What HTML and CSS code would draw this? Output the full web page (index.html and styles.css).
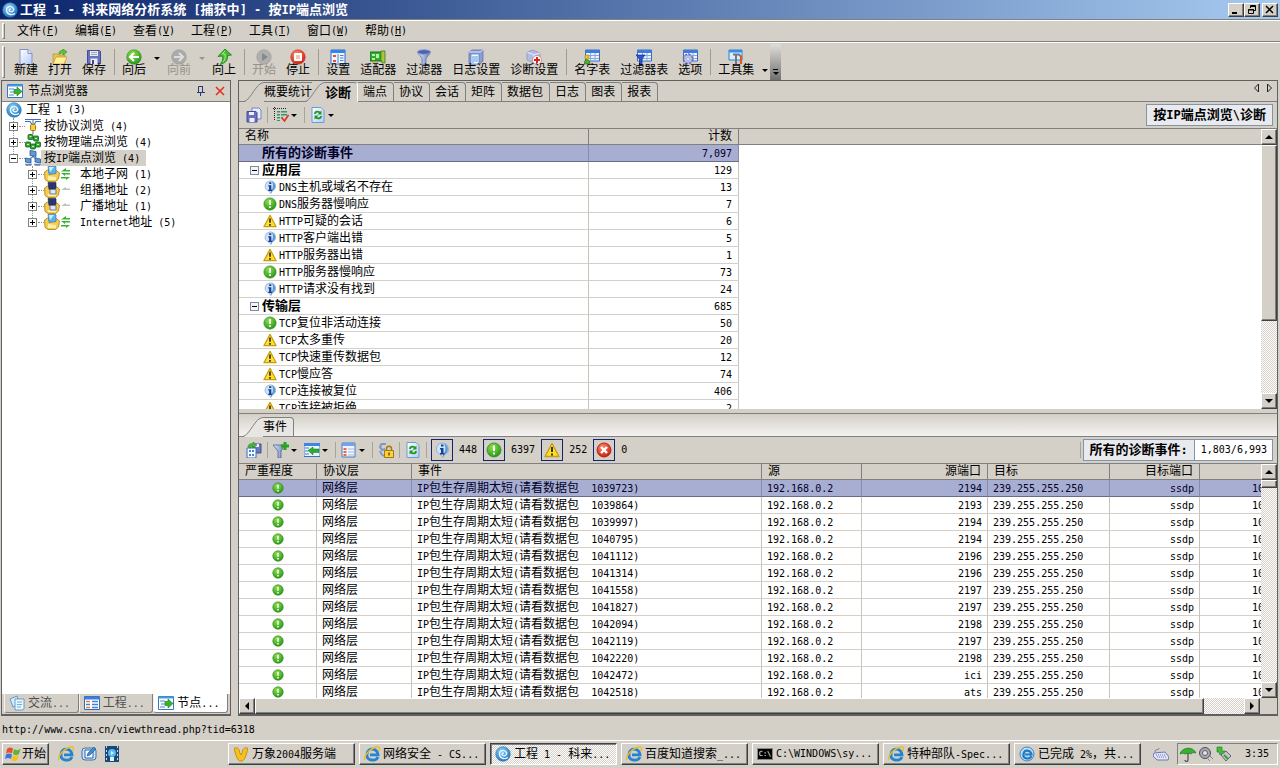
FILE: index.html
```
<!DOCTYPE html>
<html lang="zh-CN">
<head>
    <meta charset="UTF-8">
    <meta name="viewport" content="width=device-width, initial-scale=1.0">
    <title>科来网络分析系统</title>
    <link rel="stylesheet" href="styles.css">
</head>
<body>
    <svg class="defs" aria-hidden="true">
        <defs>
            <radialGradient id="gBlue" cx=".4" cy=".3" r=".8"><stop offset="0" stop-color="#8cd0f4"/><stop offset="1" stop-color="#1568b8"/></radialGradient>
            <radialGradient id="gGreen" cx=".4" cy=".3" r=".8"><stop offset="0" stop-color="#8fe04c"/><stop offset="1" stop-color="#1b8f14"/></radialGradient>
            <radialGradient id="gRed" cx=".4" cy=".3" r=".8"><stop offset="0" stop-color="#ff8a6c"/><stop offset="1" stop-color="#c81408"/></radialGradient>
            <linearGradient id="gPage" x1="0" y1="0" x2="1" y2="1"><stop offset="0" stop-color="#fff"/><stop offset="1" stop-color="#b4ccf4"/></linearGradient>
            <linearGradient id="gSteel" x1="0" y1="0" x2="1" y2="0"><stop offset="0" stop-color="#e4ecfa"/><stop offset="1" stop-color="#6478b8"/></linearGradient>
        </defs>
        <symbol id="logo" viewBox="0 0 16 16"><circle cx="8" cy="8" r="7.3" fill="url(#gBlue)" stroke="#2b7cc0" stroke-width=".6"/><path d="M13 11.5C9 14 4.500 12 4.500 8S9 3.500 11 6s-1 4.500-3 3.500S7.500 7 8.800 7" fill="none" stroke="#eaf8ff" stroke-width="1.300"/></symbol>
        <symbol id="new" viewBox="0 0 16 16"><path d="M2 .5h8l4 4v11H2z" fill="url(#gPage)" stroke="#7e94c8"/><path d="M10 .5v4h4" fill="#dce8fc" stroke="#7e94c8"/></symbol>
        <symbol id="open" viewBox="0 0 16 16"><path d="M1 5h5l1 1h6v9H1z" fill="#e8c34a" stroke="#b8902a" stroke-width=".7"/><path d="M4 8h11l-3 7H1z" fill="#ffef9c" stroke="#c09a30" stroke-width=".7"/><path d="M7 5c0-3 2-4 4-3.500V0l4 3-4 3V4C9.500 3.500 8.500 4 8 5z" fill="#5cc82c" stroke="#2a8a18" stroke-width=".6"/></symbol>
        <symbol id="save" viewBox="0 0 16 16"><path d="M1.500 1.500h12l1 1v12h-13z" fill="#6a70bc" stroke="#454a94"/><path d="M4 2h8v5H4zM4.500 9.500h7V15h-7z" fill="#e8ecfa"/><path d="M5 3.500h6M5 5.500h6" stroke="#9aa"/><path d="M6 11h2v4H6z" fill="#45488c"/></symbol>
        <symbol id="back" viewBox="0 0 16 16"><circle cx="8" cy="8" r="7.300" fill="url(#gGreen)" stroke="#2a8a1a" stroke-width=".5"/><path d="M13 8H4.500M8 4L4 8l4 4" fill="none" stroke="#fff" stroke-width="2.200"/></symbol>
        <symbol id="forward" viewBox="0 0 16 16"><circle cx="8" cy="8" r="7.300" fill="#aaa" stroke="#999" stroke-width=".5"/><path d="M3 8h8.500M8 4l4 4-4 4" fill="none" stroke="#ddd" stroke-width="2.200"/></symbol>
        <symbol id="up" viewBox="0 0 16 16"><path d="M9 0L15.500 6l-4 .5C12 11 10 14 4 15.500 7 12 7 10 6.500 7L2 7.500z" fill="#42bd2c" stroke="#18801c" stroke-width=".8"/><path d="M9 2L6 5l3 0c.5 4 0 6-2 8" fill="none" stroke="#a8f088"/></symbol>
        <symbol id="play" viewBox="0 0 16 16"><circle cx="8" cy="8" r="7.300" fill="#b0b0b0" stroke="#999" stroke-width=".5"/><path d="M6 4l6 4-6 4z" fill="#888"/></symbol>
        <symbol id="stop" viewBox="0 0 16 16"><circle cx="8" cy="8" r="7.300" fill="url(#gRed)" stroke="#d04030" stroke-width=".6"/><rect x="4" y="4" width="8" height="8" rx="1" fill="#fff"/><path d="M6 6h4v4H6z" fill="#f8c0b4"/></symbol>
        <symbol id="setting" viewBox="0 0 16 16"><path d="M1 1h14v14H1z" fill="#eef5ff" stroke="#2b6cc8"/><path d="M1 1h14v3H1z" fill="#3484e4"/><path d="M3 6h3v2H3zM3 11h3v2H3z" fill="#e05038"/><path d="M8 5v9M10 6.500h3.500M10 9h3.500M10 11.500h3.500" stroke="#4a82cc"/></symbol>
        <symbol id="adapter" viewBox="0 0 16 16"><path d="M0 3h13v9H0z" fill="#32a838" stroke="#146c20"/><path d="M2 5h3v2H2zM6 5h3v4H6zM2 9h3v2H2z" fill="#b8f09c"/><path d="M11 2h4v12h-3v-2h-1z" fill="#a8c83c" stroke="#3c7820" stroke-width=".8"/><path d="M3 12v2m2-2v2m2-2v2" stroke="#c89c20"/></symbol>
        <symbol id="filter" viewBox="0 0 16 16"><path d="M1.500 3c0 2 4.500 5 4.500 7v5.500h4V10c0-2 4.500-5 4.500-7z" fill="url(#gSteel)" stroke="#5068a8" stroke-width=".7"/><ellipse cx="8" cy="3" rx="6.500" ry="2.300" fill="#4c62b0" stroke="#8ca0d8"/></symbol>
        <symbol id="log" viewBox="0 0 16 16"><path d="M1 3l3-2h11v11l-3 3H1z" fill="#8c9cd4" stroke="#5c6cac" stroke-width=".7"/><path d="M1 3h11l3-2" fill="none" stroke="#dce4fa"/><path d="M3 5h8v10H3z" fill="#f2f7ff" stroke="#4a7ac0" stroke-width=".7"/><path d="M5 7v7M6 8h4M6 10h4M6 12h4" stroke="#5a9ae0"/></symbol>
        <symbol id="diag" viewBox="0 0 16 16"><path d="M1 3l6-2 7 3v6l-6 4-7-3z" fill="#b4bce4" stroke="#8890c0" stroke-width=".7"/><path d="M1 3l7 3 6-2M8 6v7" stroke="#e8ecff" fill="none"/><circle cx="11" cy="11" r="4.500" fill="#fff" stroke="#c07070" stroke-width=".7"/><path d="M11 8v6M8 11h6" stroke="#e02010" stroke-width="2"/></symbol>
        <symbol id="grid" viewBox="0 0 16 16"><path d="M1.500 1h14v11h-14z" fill="#edf4ff" stroke="#3d6fc0"/><path d="M1.500 1h14v3h-14z" fill="#3c7ce0"/><path d="M2 6.500h13M2 9.500h13M6.500 4v8M11 4v8" stroke="#88a8dc"/></symbol>
        <symbol id="names" viewBox="0 0 16 16"><use href="#grid"/><circle cx="3" cy="8" r="2.200" fill="#f0c030" stroke="#8a7410" stroke-width=".5"/><path d="M0 15c0-6 6-6 6 0z" fill="#4cae2c" stroke="#2c6c18" stroke-width=".6"/></symbol>
        <symbol id="ftable" viewBox="0 0 16 16"><use href="#grid"/><path d="M0 6h9L6 10v6H3.500v-6z" fill="#3054d0" stroke="#102c90" stroke-width=".7"/></symbol>
        <symbol id="options" viewBox="0 0 16 16"><use href="#grid"/><circle cx="6" cy="10" r="4.200" fill="#aab4e4" stroke="#6470b8" stroke-width="2.600" stroke-dasharray="2 1.300"/><circle cx="6" cy="10" r="4" fill="#bcc4ec" stroke="#7480c0" stroke-width=".5"/><circle cx="6" cy="10" r="1.500" fill="#f4f6ff" stroke="#7480c0" stroke-width=".5"/></symbol>
        <symbol id="tools" viewBox="0 0 16 16"><path d="M1 1h13v10H1z" fill="#d8efff" stroke="#3080cc"/><path d="M1 1h13v2.500H1z" fill="#3a8ce8"/><path d="M5 5.500h6l2 2M8 5v10" stroke="#707888" stroke-width="2" fill="none"/><path d="M13 7v8" stroke="#d85c24" stroke-width="2.200"/></symbol>
        <symbol id="node" viewBox="0 0 16 16"><path d="M.5 1.500h15v13H.5z" fill="#fff" stroke="#3478c8"/><path d="M.5 1.500h15v2H.5z" fill="#4898e8"/><path d="M2 6h5M3 9h4M2 12h5" stroke="#4888d0"/><path d="M7 6.500h3V4l5 4.500-5 4.500v-2.500H7z" fill="#38b42c" stroke="#167a18" stroke-width=".6"/></symbol>
        <symbol id="protocol" viewBox="0 0 16 16"><path d="M0 1.500h16M0 3.500h5l2 3m9-3h-5l-2 3" stroke="#3c70c0" stroke-width="1.200" fill="none"/><rect x="5.500" y="6.500" width="5" height="6" rx="1" fill="#f7cf40" stroke="#a47c18"/><path d="M8 2v4M8 13v3" stroke="#667"/></symbol>
        <symbol id="physical" viewBox="0 0 16 16"><g fill="#35a838" stroke="#115c1c" stroke-width=".8"><rect x="3" y=".5" width="5" height="5" rx="1"/><rect x="8.500" y="2" width="5" height="5" rx="1"/><rect x=".5" y="8" width="5" height="5" rx="1"/><rect x="5.500" y="10" width="5" height="5" rx="1"/><rect x="10.500" y="8" width="5" height="5" rx="1"/></g><path d="M4.500 2.500h2m3.500 2h2M2 10.500h2m3 2h2m3-2h2" stroke="#c8ff9c"/></symbol>
        <symbol id="ip" viewBox="0 0 16 16"><path d="M8 6l-4 5m4-5l4 5" stroke="#678"/><g fill="#5c9cdc" stroke="#2a5494" stroke-width=".8"><path d="M5 .5l6 1v5l-6-1zM.5 8l5.500 1v4l-5.500-1zM10 8l5.500 1v4l-5.500-1z"/></g><path d="M0 14h7l-1 1.500H1zM9 14h7l-1 1.500h-5zM5 7.500h7" fill="#7080a0" stroke="#7080a0" stroke-width=".5"/></symbol>
        <symbol id="pc" viewBox="0 0 16 16"><path d="M.5 6l3-2h8l4 3-1 6-3 2.500H4l-3-2z" fill="#f4cc50" stroke="#a87c18" stroke-width=".8"/><path d="M4 10l8 1v3H4z" fill="#fff0a8"/><path d="M4 .5h8v7l-7 1z" fill="#5cb4ec" stroke="#3468a8" stroke-width=".6"/><path d="M5 1h5l-4 5z" fill="#c8f0ff"/></symbol>
        <symbol id="pcdark" viewBox="0 0 16 16"><path d="M.5 6l3-2h8l4 3-1 6-3 2.500H4l-3-2z" fill="#f4cc50" stroke="#a87c18" stroke-width=".8"/><path d="M4 12l8 0v2H4z" fill="#fff0a8"/><path d="M4 .5h8v6l-7 1z" fill="#28366c" stroke="#182244" stroke-width=".6"/><path d="M6 7.500h6V12H6z" fill="#e0e4f4" stroke="#778"/></symbol>
        <symbol id="flow" viewBox="0 0 9 12"><path d="M0 3.500L5 0v2h4v1.500zM9 5H0l4 3V6.500h5zM0 9h9l-4 3v-1.500H0z" fill="#3cb034"/></symbol>
        <symbol id="noflow" viewBox="0 0 9 12"><path d="M0 6l5-3v1.500h4V6z" fill="#b8c4b8"/></symbol>
        <symbol id="info" viewBox="0 0 16 16"><path d="M8 1a6.500 6 0 0 1 2.500 11.500L9 15.500l-2.500-3A6.500 6 0 0 1 8 1z" fill="#cfe3f8" stroke="#7ca4d0" stroke-width=".8"/><path d="M10 1.500a6 6 0 0 1 .5 11L9 15v-2.500c3-3 3-8 1-11z" fill="#5c98d8"/><path d="M7 2.500h2.500v2H7zM6 6h3.500v5h1v1.500H6V11h1V7.500H6z" fill="#173f94"/></symbol>
        <symbol id="ok" viewBox="0 0 16 16"><circle cx="8" cy="8" r="7" fill="url(#gGreen)" stroke="#2f8c20" stroke-width=".8"/><path d="M8 3.500V9m0 1.500v2" stroke="#fff" stroke-width="2"/></symbol>
        <symbol id="warn" viewBox="0 0 16 16"><path d="M8 1.500L15 14.500H1z" fill="#ffdf24" stroke="#c89c10" stroke-width="1.400" stroke-linejoin="round"/><path d="M8 5v5m0 1.500v2" stroke="#222" stroke-width="1.800"/></symbol>
        <symbol id="error" viewBox="0 0 16 16"><circle cx="8" cy="8" r="7" fill="url(#gRed)" stroke="#a01008" stroke-width=".8"/><path d="M5 5l6 6m0-6l-6 6" stroke="#fff" stroke-width="2.400"/></symbol>
        <symbol id="saveas" viewBox="0 0 16 16"><path d="M6 1h7l2 2v9H6z" fill="#e4ecff" stroke="#7484c0"/><path d="M1 4.500h9l1 1V15H1z" fill="#6a70bc" stroke="#454a94"/><path d="M3 5h5v3H3zM3.500 11h5v4h-5z" fill="#eef"/></symbol>
        <symbol id="columns" viewBox="0 0 16 16"><path d="M0 1.500h13M1.500 0v13" stroke="#222" stroke-dasharray="1 1"/><path d="M4 4h3v1.500H4zM8 4h6v1.500H8zM4 7h3v1.500H4zM8 7h6v1.500H8zM4 10h3v1.500H4zM8 10h2v1.500H8zM4 13h3v1H4z" fill="#38946c"/><path d="M9 11l2.500 3 4-6" fill="none" stroke="#e03020" stroke-width="1.600"/></symbol>
        <symbol id="refresh" viewBox="0 0 16 16"><path d="M2 .5h9l3 3v12H2z" fill="url(#gPage)" stroke="#6c9cd4"/><path d="M5 7c0-3 4-3 5-1M11 9c0 3-4 3-5 1" fill="none" stroke="#1c9a20" stroke-width="1.800"/><path d="M11.500 3.500v4h-4zM4.500 12.500v-4h4z" fill="#1c9a20"/></symbol>
        <symbol id="export" viewBox="0 0 16 16"><path d="M7 2h8v9H7z" fill="#6a78c0" stroke="#40508c"/><path d="M9 2h4v3H9z" fill="#eef"/><path d="M1 6h9v10H1z" fill="#f4f8ff" stroke="#3c6cb8"/><path d="M3 8h2v2H3zM6 8h2v2H6zM3 12h2v2H3zM6 12h2v2H6z" fill="#3a88d8"/><path d="M2 5c0-3 3-4 5-3V0l4 3-4 3V4C5 4 5 5 5 6z" fill="#48b830" stroke="#1c7818" stroke-width=".5"/></symbol>
        <symbol id="addfilter" viewBox="0 0 16 16"><path d="M0 3h12L8 9v7H5V9z" fill="url(#gSteel)" stroke="#4c6098" stroke-width=".8"/><path d="M12 0v8M8 4h8" stroke="#28a424" stroke-width="3"/></symbol>
        <symbol id="locate" viewBox="0 0 16 16"><path d="M0 1.500h16v13H0z" fill="#eaf3ff" stroke="#3074c8"/><path d="M0 1h16v3H0z" fill="#3c88e0"/><path d="M1 6h4m-4 3h3m-3 3h4" stroke="#4a80c8"/><path d="M4 8.500L9 5v2h6v3.500H9V13z" fill="#2eac2c" stroke="#167418" stroke-width=".5"/></symbol>
        <symbol id="list" viewBox="0 0 16 16"><path d="M1 1h13v14H1z" fill="#f0f5ff" stroke="#4478c8"/><path d="M1 1h13v3H1z" fill="#70a4ec"/><path d="M2.500 6h3v2h-3zM2.500 9h3v2h-3zM2.500 12h3v2h-3z" fill="#e06c50"/><path d="M7 7h6M7 10h6M7 13h6" stroke="#a8b8d8"/></symbol>
        <symbol id="lock" viewBox="0 0 16 16"><path d="M8 2H3.500L2 5l2 3 3-1M2 9c1 3 2 5 5 5" fill="none" stroke="#7c98c8" stroke-width="2"/><path d="M8.500 9V6.500c0-3 5-3 5 0V9" fill="none" stroke="#a87810" stroke-width="1.500"/><path d="M6.500 8.500h9v7h-9z" fill="#fad23c" stroke="#a47814"/><path d="M11 10.500v3" stroke="#704c08" stroke-width="1.500"/></symbol>
        <symbol id="chat" viewBox="0 0 16 16"><path d="M1 4l7-3 2 8-6 3z" fill="#d4eaff" stroke="#4c84c0" stroke-width=".8"/><path d="M6 4h9v10l-2 1H6z" fill="#eaf5ff" stroke="#5488bc" stroke-width=".8"/><path d="M8 7h5M8 9.500h5M8 12h4" stroke="#68b0d8"/></symbol>
        <symbol id="project" viewBox="0 0 16 16"><path d="M.5 1.500h15v13H.5z" fill="#fff" stroke="#3468b8"/><path d="M.5 1.500h15v3H.5z" fill="#3c7ce0"/><path d="M2 6.500h4M2 12.500h4" stroke="#e08028" stroke-width="1.500"/><path d="M2 9.500h4M8 6.500h6M8 9.500h6M8 12.500h6" stroke="#4880d8" stroke-width="1.500"/></symbol>
        <symbol id="windows" viewBox="0 0 16 16"><path d="M2 3c2-2 4-2 6-.5L7 7.500C5 6 3 6 1 7.500z" fill="#e8502c"/><path d="M9 3c2 1.500 4 1.500 6.500 0L14 8c-2 1.500-4 1.500-6 0z" fill="#60b430"/><path d="M1 8.500C3 7 5 7 7 8.500L6 13c-2-1.500-4-1.500-6 0z" fill="#3c74dc"/><path d="M8 9c2 1.500 4 1.500 6 0l-1.500 5c-2 1.500-4 1.500-6 0z" fill="#f8c020"/></symbol>
        <symbol id="ie" viewBox="0 0 16 16"><path d="M14 11c-2 5-12 4-11-3s10-6 11 .8H6" fill="none" stroke="#2484d0" stroke-width="2.800"/><path d="M1 14C-1 10 7 1 14 1c2 0 2 2 .5 4" fill="none" stroke="#f0bc28" stroke-width="1.500"/></symbol>
        <symbol id="iesmall" viewBox="0 0 16 16"><circle cx="8" cy="8" r="7" fill="#b8e0f8" stroke="#3c84c0"/><path d="M12.500 10c-2 4-9 3-8-2s7-4 8 .5H6" fill="none" stroke="#2478c0" stroke-width="2.200"/></symbol>
        <symbol id="desktop" viewBox="0 0 16 16"><rect x="1" y="2" width="14" height="12" rx="3" fill="#cde4f8" stroke="#3470ac"/><path d="M4 4h8v8H4z" fill="#fff" stroke="#2860a0"/><path d="M6 10l1-3 6-6 2 2-6 6z" fill="#408cd4" stroke="#205488" stroke-width=".6"/></symbol>
        <symbol id="media" viewBox="0 0 16 16"><path d="M1 0h14v16H1z" fill="#1c4878"/><path d="M2.500 0v16M13.500 0v16" stroke="#bce0f8" stroke-dasharray="2 2"/><circle cx="8" cy="7" r="4" fill="#58b8f0"/><path d="M7 5l3 2-3 2zM6 11h4v4H6z" fill="#d8f4ff"/></symbol>
        <symbol id="vee" viewBox="0 0 16 16"><path d="M1.500 2c3-1 5 1 5 4L8 9l1.500-3c0-3 2-5 5-4 0 5-3 12-5 13h-3c-2-1-5-8-5-13z" fill="#f8c018" stroke="#b88408" stroke-width=".8"/></symbol>
        <symbol id="keyboard" viewBox="0 0 16 16"><path d="M1 7l11-1 4 5-1 3H4L0 10z" fill="#e0e4f8" stroke="#7078b0"/><path d="M3 9h9M4 11h9" stroke="#7078b0" stroke-dasharray="1 1"/><path d="M2 6c0-4 4-1 4-4" fill="none" stroke="#7078b0"/></symbol>
        <symbol id="umbrella" viewBox="0 0 16 16"><path d="M0 8C2 1 13 0 16 7c-3-1-4 0-5 1-2-1-4-1-6 0-2-1-3-1-5 0z" fill="#34b42c" stroke="#147018" stroke-width=".7"/><path d="M8 7v7c0 2-3 2-3 0" fill="none" stroke="#555" stroke-width="1.300"/></symbol>
        <symbol id="sound" viewBox="0 0 16 16"><circle cx="7" cy="7" r="5.500" fill="#a8a8b0" stroke="#505058"/><circle cx="7" cy="7" r="2.500" fill="#e4e4ec" stroke="#606068"/><path d="M12 10l3 3M10 13l2 2" stroke="#888"/></symbol>
        <symbol id="usb" viewBox="0 0 16 16"><path d="M1 1h5v4h3l-5 4-1-3H1z" fill="#44bc34" stroke="#187a20" stroke-width=".6"/><path d="M5 9l5-4 5 5-5 5z" fill="#bcc4cc" stroke="#606870"/><path d="M8 9l4 4" stroke="#38a42c" stroke-width="2"/></symbol>
    </svg>

    <div class="titlebar">
        <svg class="icon"><use href="#logo"/></svg>
        <h1>工程<span class="en"> 1 - </span>科来网络分析系统<span class="en"> [</span>捕获中<span class="en">] - </span>按<span class="en">IP</span>端点浏览</h1>
        <div class="winbuttons">
            <button class="bevel" aria-label="最小化"><svg viewBox="0 0 10 10"><path d="M1 8h5" stroke="#000" stroke-width="2"/></svg></button>
            <button class="bevel" aria-label="还原"><svg viewBox="0 0 10 10"><path d="M3.500 3V.5h5v5H7M3 1.500h6M1.500 4.500h5v4h-5zM1 5h6" fill="none" stroke="#000"/></svg></button>
            <button class="bevel close" aria-label="关闭"><svg viewBox="0 0 10 10"><path d="M1 1l7 7M8 1L1 8" stroke="#000" stroke-width="1.500"/></svg></button>
        </div>
    </div>

    <nav class="menubar">
        <span class="grip"></span>
        <button>文件<span class="en">(<u>F</u>)</span></button>
        <button>编辑<span class="en">(<u>E</u>)</span></button>
        <button>查看<span class="en">(<u>V</u>)</span></button>
        <button>工程<span class="en">(<u>P</u>)</span></button>
        <button>工具<span class="en">(<u>T</u>)</span></button>
        <button>窗口<span class="en">(<u>W</u>)</span></button>
        <button>帮助<span class="en">(<u>H</u>)</span></button>
    </nav>

    <div class="toolbar">
        <span class="grip"></span>
        <button><svg class="icon"><use href="#new"/></svg>新建</button>
        <button><svg class="icon"><use href="#open"/></svg>打开</button>
        <button><svg class="icon"><use href="#save"/></svg>保存</button>
        <span class="sep"></span>
        <button><svg class="icon"><use href="#back"/></svg>向后</button>
        <button class="drop" aria-label="后退列表"><i class="caret"></i></button>
        <button disabled><svg class="icon"><use href="#forward"/></svg>向前</button>
        <button class="drop" aria-label="前进列表" disabled><i class="caret"></i></button>
        <button><svg class="icon"><use href="#up"/></svg>向上</button>
        <span class="sep"></span>
        <button disabled><svg class="icon"><use href="#play"/></svg>开始</button>
        <button><svg class="icon"><use href="#stop"/></svg>停止</button>
        <span class="sep"></span>
        <button><svg class="icon"><use href="#setting"/></svg>设置</button>
        <button><svg class="icon"><use href="#adapter"/></svg>适配器</button>
        <button><svg class="icon"><use href="#filter"/></svg>过滤器</button>
        <button><svg class="icon"><use href="#log"/></svg>日志设置</button>
        <button><svg class="icon"><use href="#diag"/></svg>诊断设置</button>
        <span class="sep"></span>
        <button><svg class="icon"><use href="#names"/></svg>名字表</button>
        <button><svg class="icon"><use href="#ftable"/></svg>过滤器表</button>
        <button><svg class="icon"><use href="#options"/></svg>选项</button>
        <span class="sep"></span>
        <button class="toolset"><svg class="icon"><use href="#tools"/></svg>工具集</button>
        <button class="drop low" aria-label="工具列表"><i class="caret"></i></button>
        <button class="overflow" aria-label="更多"><i class="dash"></i><i class="caret"></i></button>
    </div>

    <main>
        <aside class="explorer">
            <div class="panel-head">
                <svg class="icon"><use href="#node"/></svg>
                <span class="grow">节点浏览器</span>
                <button aria-label="固定"><svg viewBox="0 0 10 10"><path d="M2.500 6V.5h4V6M6.500 0v6M1 6.500h8M4.500 7v3" fill="none" stroke="#223a7a"/></svg></button>
                <button aria-label="关闭"><svg viewBox="0 0 10 10"><path d="M1 1l8 8M9 1L1 9" stroke="#e03020" stroke-width="1.600"/></svg></button>
            </div>
            <div class="tree">
                <div class="root"><svg class="icon"><use href="#logo"/></svg>工程<span class="en"> 1 (3)</span></div>
                <ul>
                    <li><div class="row"><button class="toggle plus" aria-label="展开"></button><svg class="icon"><use href="#protocol"/></svg><span class="label">按协议浏览<span class="en"> (4)</span></span></div></li>
                    <li><div class="row"><button class="toggle plus" aria-label="展开"></button><svg class="icon"><use href="#physical"/></svg><span class="label">按物理端点浏览<span class="en"> (4)</span></span></div></li>
                    <li><div class="row"><button class="toggle" aria-label="折叠"></button><svg class="icon"><use href="#ip"/></svg><span class="label current">按<span class="en">IP</span>端点浏览<span class="en"> (4)</span></span></div>
                        <ul>
                            <li><div class="row"><button class="toggle plus" aria-label="展开"></button><svg class="icon"><use href="#pc"/></svg><svg class="flow"><use href="#flow"/></svg><span class="label">本地子网<span class="en"> (1)</span></span></div></li>
                            <li><div class="row"><button class="toggle plus" aria-label="展开"></button><svg class="icon"><use href="#pcdark"/></svg><svg class="flow"><use href="#noflow"/></svg><span class="label">组播地址<span class="en"> (2)</span></span></div></li>
                            <li><div class="row"><button class="toggle plus" aria-label="展开"></button><svg class="icon"><use href="#pcdark"/></svg><svg class="flow"><use href="#noflow"/></svg><span class="label">广播地址<span class="en"> (1)</span></span></div></li>
                            <li><div class="row"><button class="toggle plus" aria-label="展开"></button><svg class="icon"><use href="#pc"/></svg><svg class="flow"><use href="#flow"/></svg><span class="label"><span class="en">Internet</span>地址<span class="en"> (5)</span></span></div></li>
                        </ul>
                    </li>
                </ul>
            </div>
            <div class="bottom-tabs">
                <button><svg class="icon"><use href="#chat"/></svg><span>交流<span class="en">...</span></span></button>
                <button><svg class="icon"><use href="#project"/></svg><span>工程<span class="en">...</span></span></button>
                <button class="active"><svg class="icon"><use href="#node"/></svg><span>节点<span class="en">...</span></span></button>
            </div>
        </aside>

        <section class="work">
            <div class="pane">
                <div class="tabs">
                    <button class="first"><svg class="slope" viewBox="0 0 20 20"><path d="M0 20C8 18 11 .5 20 .5V20" fill="#d4d0c8" stroke="none"/><path d="M0 19.500C7 18 12 .5 20 .5" fill="none" stroke="#808080"/></svg>概要统计</button>
                    <button class="first active"><svg class="slope" viewBox="0 0 20 20"><path d="M0 20C8 18 11 .5 20 .5V20" fill="#d4d0c8" stroke="none"/><path d="M0 19.500C7 18 12 .5 20 .5" fill="none" stroke="#808080"/></svg>诊断</button>
                    <button>端点</button>
                    <button>协议</button>
                    <button>会话</button>
                    <button>矩阵</button>
                    <button>数据包</button>
                    <button>日志</button>
                    <button>图表</button>
                    <button>报表</button>
                    <span class="tab-arrows">
                        <svg viewBox="0 0 20 10"><path d="M5.500 1v8L1.500 5zM14.500 1v8l4-4z" fill="none" stroke="#222"/></svg>
                    </span>
                </div>
                <div class="subbar">
                    <button aria-label="保存"><svg class="icon"><use href="#saveas"/></svg></button>
                    <span class="line"></span>
                    <button class="dd" aria-label="列"><svg class="icon"><use href="#columns"/></svg><i class="caret"></i></button>
                    <span class="line"></span>
                    <button class="dd" aria-label="刷新"><svg class="icon"><use href="#refresh"/></svg><i class="caret"></i></button>
                    <div class="where"><strong>按<span class="en">IP</span>端点浏览<span class="en">\</span>诊断</strong></div>
                </div>
                <div class="scroller">
                    <div class="clip">
                        <table class="diag">
                            <colgroup><col class="c350"><col class="c150"><col></colgroup>
                            <thead><tr><th>名称</th><th class="r">计数</th><th class="blank"></th></tr></thead>
                            <tbody id="diagRows"></tbody>
                        </table>
                    </div>
                    <div class="vbar">
                        <button class="bevel" aria-label="向上滚动"><i class="caret up"></i></button>
                        <div class="track"><div class="thumb bevel"></div></div>
                        <button class="bevel" aria-label="向下滚动"><i class="caret"></i></button>
                    </div>
                </div>
            </div>

            <div class="pane events">
                <div class="tabs shaded">
                    <button class="first"><svg class="slope" viewBox="0 0 20 20"><path d="M0 20C8 18 11 .5 20 .5V20" fill="#e8e6e2" stroke="none"/><path d="M0 19.500C7 18 12 .5 20 .5" fill="none" stroke="#808080"/></svg>事件</button>
                </div>
                <div class="subbar">
                    <button aria-label="导出"><svg class="icon"><use href="#export"/></svg></button>
                    <span class="line"></span>
                    <button class="dd" aria-label="过滤"><svg class="icon"><use href="#addfilter"/></svg><i class="caret"></i></button>
                    <button class="dd" aria-label="定位"><svg class="icon"><use href="#locate"/></svg><i class="caret"></i></button>
                    <span class="line"></span>
                    <button class="dd" aria-label="列表"><svg class="icon"><use href="#list"/></svg><i class="caret"></i></button>
                    <span class="line"></span>
                    <button aria-label="锁定"><svg class="icon"><use href="#lock"/></svg></button>
                    <span class="line"></span>
                    <button aria-label="刷新"><svg class="icon"><use href="#refresh"/></svg></button>
                    <span class="line"></span>
                    <div class="counters">
                        <button aria-label="信息"><svg class="icon"><use href="#info"/></svg></button><span class="en">448</span>
                        <button aria-label="注意"><svg class="icon"><use href="#ok"/></svg></button><span class="en">6397</span>
                        <button aria-label="警告"><svg class="icon"><use href="#warn"/></svg></button><span class="en">252</span>
                        <button aria-label="错误"><svg class="icon"><use href="#error"/></svg></button><span class="en">0</span>
                    </div>
                    <span class="line push"></span>
                    <div class="where total"><strong>所有的诊断事件<span class="en">:</span></strong><span class="en value">1,803/6,993</span></div>
                </div>
                <div class="scroller">
                    <div class="clip">
                        <table class="log">
                            <colgroup><col class="c78"><col class="c95"><col class="c350"><col class="c100"><col class="c126"><col class="c122"><col class="c90"><col class="c100"></colgroup>
                            <thead><tr><th>严重程度</th><th>协议层</th><th>事件</th><th>源</th><th class="r">源端口</th><th>目标</th><th class="r">目标端口</th><th></th></tr></thead>
                            <tbody id="eventRows"></tbody>
                        </table>
                    </div>
                    <div class="vbar short">
                        <button class="bevel" aria-label="向上滚动"><i class="caret up"></i></button>
                        <div class="track"><div class="thumb bevel"></div></div>
                        <button class="bevel" aria-label="向下滚动"><i class="caret"></i></button>
                    </div>
                </div>
                <div class="hbar">
                    <button class="bevel" aria-label="向左滚动"><i class="caret left"></i></button>
                    <div class="track"><div class="thumb bevel"></div></div>
                    <button class="bevel" aria-label="向右滚动"><i class="caret right"></i></button>
                </div>
            </div>
        </section>
    </main>

    <div class="statusbar"><span class="en">http://www.csna.cn/viewthread.php?tid=6318</span></div>

    <footer class="taskbar">
        <div class="launch">
            <button class="bevel start"><svg class="icon"><use href="#windows"/></svg>开始</button>
            <button aria-label="Internet Explorer"><svg class="icon"><use href="#ie"/></svg></button>
            <button aria-label="显示桌面"><svg class="icon"><use href="#desktop"/></svg></button>
            <button aria-label="媒体播放器"><svg class="icon"><use href="#media"/></svg></button>
        </div>
        <div class="tasks">
            <button class="bevel"><svg class="icon"><use href="#vee"/></svg><span>万象<span class="en">2004</span>服务端</span></button>
            <button class="bevel"><svg class="icon"><use href="#ie"/></svg><span>网络安全<span class="en"> - CS...</span></span></button>
            <button class="bevel pressed"><svg class="icon"><use href="#logo"/></svg><span>工程<span class="en"> 1 - </span>科来<span class="en">...</span></span></button>
            <button class="bevel"><svg class="icon"><use href="#ie"/></svg><span>百度知道搜索<span class="en">_...</span></span></button>
            <button class="bevel"><span class="cmd">C:\</span><span class="en">C:\WINDOWS\sy...</span></button>
            <button class="bevel"><svg class="icon"><use href="#ie"/></svg><span>特种部队<span class="en">-Spec...</span></span></button>
            <button class="bevel"><svg class="icon"><use href="#iesmall"/></svg><span>已完成<span class="en"> 2%</span>，共<span class="en">...</span></span></button>
        </div>
        <div class="side">
            <svg class="icon"><use href="#keyboard"/></svg>
            <div class="tray">
                <svg class="icon"><use href="#umbrella"/></svg>
                <svg class="icon"><use href="#sound"/></svg>
                <svg class="icon"><use href="#usb"/></svg>
                <span class="en">3:35</span>
            </div>
        </div>
    </footer>

    <script src="script.js"></script>
</body>
</html>
```
FILE: styles.css
```
* {
    box-sizing: border-box;
}
body {
    margin: 0;
    height: 100vh;
    display: flex;
    flex-direction: column;
    overflow: hidden;
    background-color: #d4d0c8;
    color: #000;
    font-family: "DejaVu Sans Mono", "Noto Sans CJK SC", monospace;
    font-size: 12px;
    line-height: 16px;
}
button {
    background: none;
    border: none;
    padding: 0;
    font: inherit;
    color: inherit;
    display: flex;
    align-items: center;
    justify-content: center;
    white-space: pre;
}
.en {
    font-family: "DejaVu Sans Mono", monospace;
    font-size: 10px;
    line-height: 1;
    white-space: pre;
}
.defs {
    position: absolute;
    width: 0;
    height: 0;
}
.icon {
    width: 16px;
    height: 16px;
    flex: none;
    display: block;
}
.bevel {
    background-color: #d4d0c8;
    border: 1px solid;
    border-color: #fff #404040 #404040 #fff;
    box-shadow: inset -1px -1px 0 #808080;
}
.caret {
    width: 0;
    height: 0;
    border: 3px solid transparent;
    border-top-color: #000;
    border-bottom: none;
}
.caret.up {
    border: 4px solid transparent;
    border-bottom-color: #000;
    border-top: none;
}
.caret.left {
    border: 4px solid transparent;
    border-right-color: #000;
    border-left: none;
}
.caret.right {
    border: 4px solid transparent;
    border-left-color: #000;
    border-right: none;
}
.grow {
    flex: 1;
}

/* title and menu */
.titlebar {
    display: flex;
    align-items: center;
    flex: none;
    height: 19px;
    padding: 0 2px;
    gap: 2px;
    background: linear-gradient(to right, #0a246a, #a6caf0);
    color: #fff;
}
.titlebar h1 {
    flex: 1;
    margin: 0;
    font-size: 13px;
    font-weight: bold;
    line-height: 16px;
}
.titlebar .en {
    font-size: 12px;
}
.winbuttons {
    display: flex;
}
.winbuttons button {
    width: 16px;
    height: 14px;
}
.winbuttons svg {
    width: 10px;
    height: 10px;
}
.winbuttons .close {
    margin-left: 2px;
}
.menubar {
    display: flex;
    align-items: center;
    flex: none;
    height: 23px;
    border-top: 1px solid #808080;
    border-bottom: 1px solid #808080;
    box-shadow: inset 0 1px 0 #fff;
}
.menubar button {
    min-width: 58px;
    height: 20px;
}
.grip {
    flex: none;
    width: 3px;
    height: 16px;
    margin: 0 4px 0 2px;
    border: 1px solid;
    border-color: #fff #808080 #808080 #fff;
}

/* main toolbar */
.toolbar {
    display: flex;
    align-items: center;
    flex: none;
    height: 38px;
    border-top: 1px solid #fff;
}
.toolbar .grip {
    height: 32px;
}
.toolbar button {
    flex-direction: column;
    justify-content: flex-start;
    padding: 5px 5px 0;
    height: 36px;
    line-height: 10px;
}
.toolbar button:disabled {
    color: #969288;
}
.toolbar .drop {
    width: 11px;
    padding: 13px 0 0;
}
.toolbar .low {
    padding-top: 25px;
}
.toolbar .drop:disabled .caret {
    border-top-color: #969288;
}
.sep {
    flex: none;
    width: 1px;
    height: 26px;
    margin: 0 2px 0 3px;
    background-color: #a09c94;
}
.toolbar .overflow {
    width: 11px;
    padding: 0 0 5px;
    gap: 2px;
    justify-content: flex-end;
    background: linear-gradient(#e0ded8, #707070);
}
.dash {
    width: 5px;
    height: 1px;
    background-color: #000;
}

/* split layout */
main {
    flex: 1;
    min-height: 0;
    display: grid;
    grid-template-columns: 230px 1fr;
    gap: 7px;
    padding: 0 2px 0 1px;
}
.explorer {
    display: flex;
    flex-direction: column;
    min-height: 0;
    border: 1px solid #606060;
    border-bottom-width: 2px;
}
.panel-head {
    display: flex;
    align-items: center;
    gap: 5px;
    flex: none;
    height: 21px;
    padding: 0 3px 0 5px;
    border-bottom: 1px solid #808080;
}
.panel-head button {
    width: 14px;
    height: 14px;
}
.panel-head svg:not(.icon) {
    width: 10px;
    height: 10px;
}
.tree {
    flex: 1;
    padding: 0 4px;
    overflow: hidden;
    background-color: #fff;
}
.tree ul {
    position: relative;
    margin: 0;
    padding: 0;
    list-style: none;
}
.tree ul::before {
    content: "";
    position: absolute;
    top: 0;
    bottom: 8px;
    left: 7px;
    border-left: 1px dotted #909090;
}
.tree > ul::before {
    bottom: 72px;
}
.tree ul ul {
    margin-left: 19px;
}
.root, .row {
    display: flex;
    align-items: center;
    height: 16px;
}
.root .icon {
    margin-right: 4px;
}
.toggle {
    position: relative;
    flex: none;
    width: 9px;
    height: 9px;
    margin: 0 7px 0 3px;
    border: 1px solid #808080;
    background: linear-gradient(#000, #000) center / 5px 1px no-repeat #fff;
}
.toggle.plus {
    background: linear-gradient(#000, #000) center / 5px 1px no-repeat,
        linear-gradient(#000, #000) center / 1px 5px no-repeat #fff;
}
.toggle::after {
    content: "";
    position: absolute;
    left: 9px;
    top: 3px;
    width: 6px;
    border-top: 1px dotted #909090;
}
.label {
    padding: 0 3px;
}
.label.current {
    background-color: #d4d0c8;
    padding-right: 6px;
}
.flow {
    width: 9px;
    height: 12px;
    margin: 0 7px 0 1px;
}
.bottom-tabs {
    display: flex;
    flex: none;
    height: 20px;
    padding: 0 2px 1px;
}
.bottom-tabs button {
    flex: 1;
    justify-content: flex-start;
    gap: 3px;
    padding-left: 4px;
    border: 1px solid #808080;
    border-top: none;
    border-left-color: #f4f2ee;
    border-radius: 0 0 3px 3px;
    color: #505050;
}
.bottom-tabs .active {
    background-color: #fff;
    color: #000;
}
.work {
    display: grid;
    grid-template-rows: 332px minmax(0, 1fr);
    min-width: 0;
    min-height: 0;
    border: 1px solid #606060;
    border-bottom-width: 2px;
}
.pane {
    display: flex;
    flex-direction: column;
    min-width: 0;
    min-height: 0;
    overflow: hidden;
    border-bottom: 4px solid #d4d0c8;
}
.events {
    border-top: 1px solid #808080;
    border-bottom: none;
}

/* tabs */
.tabs {
    display: flex;
    align-items: flex-end;
    flex: none;
    height: 21px;
    padding-left: 5px;
    border-bottom: 1px solid #808080;
}
.tabs button {
    position: relative;
    height: 19px;
    padding: 0 6px 0 5px;
    border-top: 1px solid #808080;
    border-right: 1px solid #808080;
    border-top-right-radius: 4px;
}
.tabs .first {
    margin-left: 20px;
    padding-left: 0;
}
.slope {
    position: absolute;
    right: 100%;
    top: -1px;
    width: 20px;
    height: 20px;
}
.tabs .first:has(+ .active) {
    padding-right: 0;
    border-right: none;
    border-radius: 0;
}
.tabs .active {
    z-index: 1;
    height: 20px;
    margin: 0 0 -1px 13px;
    background-color: #d4d0c8;
    font-size: 13px;
    font-weight: bold;
    border-right-color: #fff;
}
.tab-arrows {
    margin-left: auto;
    padding-right: 4px;
}
.tab-arrows svg {
    display: block;
    width: 20px;
    height: 10px;
    margin-bottom: 8px;
}
.tabs.shaded {
    height: 23px;
    padding-left: 4px;
    background: linear-gradient(#d4d0c8, #f4f3f1);
}
.shaded button {
    height: 19px;
    background-color: #e8e6e2;
}

/* small toolbars over the tables */
.subbar {
    display: flex;
    align-items: center;
    gap: 5px;
    flex: none;
    height: 26px;
    padding: 0 4px 0 7px;
}
.line {
    width: 1px;
    height: 16px;
    background-color: #a8a49c;
}
.dd {
    width: 26px;
    gap: 2px;
    justify-content: flex-start;
}
.where {
    display: flex;
    align-items: center;
    height: 22px;
    margin-left: auto;
    padding: 0 6px;
    border: 1px solid #8494a8;
    background-color: #e8eaee;
}
.where strong {
    font-size: 13px;
}
.where strong .en {
    font-size: 12px;
}
.push {
    margin-left: auto;
}
.total {
    margin-left: -3px;
    padding-right: 0;
}
.total .value {
    display: flex;
    align-items: center;
    height: 20px;
    margin-left: 6px;
    padding: 0 5px 0 6px;
    border-left: 1px solid #8494a8;
    background-color: #fff;
}
.counters {
    display: flex;
    align-items: center;
    gap: 6px;
    margin-left: -1px;
}
.counters button {
    width: 22px;
    height: 22px;
    border: 1px solid #14246c;
}

/* tables */
.scroller {
    display: flex;
    flex: 1;
    min-height: 0;
    border-top: 1px solid #808080;
    background-color: #fff;
}
.clip {
    flex: 1;
    min-width: 0;
    overflow: hidden;
}
table {
    width: 100%;
    table-layout: fixed;
    border-collapse: separate;
    border-spacing: 0;
}
.log {
    width: 1061px;
}
.c78 { width: 78px; }
.c90 { width: 90px; }
.c95 { width: 95px; }
.c100 { width: 100px; }
.c122 { width: 122px; }
.c126 { width: 126px; }
.c150 { width: 150px; }
.c350 { width: 350px; }
th {
    height: 16px;
    padding: 0 6px;
    background-color: #d4d0c8;
    border-right: 1px solid #808080;
    border-bottom: 1px solid #808080;
    font-weight: normal;
    line-height: 15px;
    text-align: left;
    white-space: nowrap;
}
td {
    height: 17px;
    padding: 0 5px;
    border-right: 1px solid #c8c4bc;
    border-bottom: 1px solid #d4d0c8;
    line-height: 16px;
    white-space: pre;
    overflow: hidden;
}
.r {
    text-align: right;
}
.diag th.blank {
    border-right: none;
}
.diag td:last-child {
    border: none;
}
.diag td.r {
    padding-right: 6px;
}
td .cell {
    display: flex;
    align-items: center;
    height: 16px;
}
td .icon {
    width: 14px;
    height: 14px;
}
.leaf {
    gap: 2px;
    padding-left: 19px;
}
.group {
    gap: 3px;
    padding-left: 6px;
    font-size: 13px;
    font-weight: bold;
}
.all {
    padding-left: 18px;
    font-size: 13px;
    font-weight: bold;
}
.fold {
    width: 9px;
    height: 9px;
    border: 1px solid #7c8ca8;
    background: linear-gradient(#000, #000) center / 5px 1px no-repeat #f4f4f4;
}
.selected td:not(.rest) {
    background-color: #a8aed2;
    border-bottom-color: #686c84;
    border-right-color: #888cac;
    color: #000028;
}
.log td:first-child .icon {
    margin: 0 auto;
    width: 12px;
    height: 12px;
}
.log td:last-child, .log th:last-child {
    padding-left: 52px;
}

/* scroll bars */
.vbar {
    display: flex;
    flex-direction: column;
    flex: none;
    width: 16px;
}
.vbar button, .hbar button {
    flex: none;
    width: 16px;
    height: 16px;
}
.vbar .caret:not(.up) {
    border-width: 4px 4px 0;
}
.track {
    flex: 1;
    background: repeating-conic-gradient(#fff 0 25%, #d4d0c8 0 50%) 0 0 / 2px 2px;
}
.vbar .thumb {
    height: 71%;
}
.short .thumb {
    height: 8px;
}
.hbar {
    display: flex;
    flex: none;
    height: 16px;
    padding-right: 17px;
}
.hbar .thumb {
    width: 96%;
    height: 16px;
}

/* status and task bar */
.statusbar {
    flex: none;
    height: 24px;
    padding: 5px 2px 0;
}
.taskbar {
    display: flex;
    align-items: center;
    flex: none;
    height: 28px;
    padding-bottom: 2px;
    border-top: 1px solid #fff;
}
.launch {
    display: flex;
    align-items: center;
    gap: 7px;
    flex: none;
    width: 228px;
    padding-left: 2px;
}
.start {
    width: 47px;
    height: 22px;
    gap: 1px;
    margin-right: 2px;
}
.tasks {
    display: flex;
    flex: 1;
    gap: 4px;
    min-width: 0;
}
.tasks button {
    flex: 1 1 0;
    min-width: 0;
    height: 22px;
    padding-left: 4px;
    justify-content: flex-start;
    overflow: hidden;
}
.tasks .icon, .cmd {
    margin-right: 3px;
}
.tasks .pressed {
    border-color: #404040 #fff #fff #404040;
    box-shadow: inset 1px 1px 0 #808080;
    background: repeating-conic-gradient(#fff 0 25%, #d4d0c8 0 50%) 0 0 / 2px 2px;
}
.cmd {
    width: 16px;
    height: 12px;
    border: 1px solid #888;
    background-color: #000;
    color: #fff;
    font-size: 7px;
    line-height: 10px;
}
.side {
    display: flex;
    align-items: center;
    gap: 4px;
    flex: none;
    width: 139px;
    padding: 0 2px 0 12px;
}
.side > .icon {
    margin-right: 4px;
}
.tray {
    display: flex;
    align-items: center;
    flex: 1;
    gap: 2px;
    height: 22px;
    padding: 0 8px 0 2px;
    border: 1px solid;
    border-color: #808080 #fff #fff #808080;
}
.tray .en {
    margin-left: auto;
}
```
FILE: script.js
```
const diagnosis = [
    ['all', '所有的诊断事件', '7,097'],
    ['group', '应用层', '129'],
    ['info', 'DNS主机或域名不存在', '13'],
    ['ok', 'DNS服务器慢响应', '7'],
    ['warn', 'HTTP可疑的会话', '6'],
    ['info', 'HTTP客户端出错', '5'],
    ['warn', 'HTTP服务器出错', '1'],
    ['ok', 'HTTP服务器慢响应', '73'],
    ['info', 'HTTP请求没有找到', '24'],
    ['group', '传输层', '685'],
    ['ok', 'TCP复位非活动连接', '50'],
    ['warn', 'TCP太多重传', '20'],
    ['warn', 'TCP快速重传数据包', '12'],
    ['warn', 'TCP慢应答', '74'],
    ['info', 'TCP连接被复位', '406'],
    ['warn', 'TCP连接被拒绝', '2']
];

const events = [
    ['1039723', '2194'], ['1039864', '2193'], ['1039997', '2194'],
    ['1040795', '2194'], ['1041112', '2196'], ['1041314', '2196'],
    ['1041558', '2197'], ['1041827', '2197'], ['1042094', '2198'],
    ['1042119', '2197'], ['1042220', '2198'], ['1042472', 'ici'],
    ['1042518', 'ats']
];

// latin runs are set at half the width of a chinese character
function en(text) {
    return text.replace(/[\x20-\x7e]+/g, '<span class="en">$&</span>');
}

function icon(name) {
    return '<svg class="icon"><use href="#' + name + '"/></svg>';
}

function nameCell(type, name) {
    if (type === 'all') return '<div class="cell all">' + name + '</div>';
    if (type === 'group') return '<div class="cell group"><button class="fold" aria-label="折叠"></button>' + name + '</div>';
    return '<div class="cell leaf">' + icon(type) + '<span>' + en(name) + '</span></div>';
}

document.getElementById('diagRows').innerHTML = diagnosis.map(function (d, i) {
    return '<tr' + (i === 0 ? ' class="selected"' : '') + '><td>' + nameCell(d[0], d[1]) +
        '</td><td class="r">' + en(d[2]) + '</td><td class="rest"></td></tr>';
}).join('');

document.getElementById('eventRows').innerHTML = events.map(function (e, i) {
    return '<tr' + (i === 0 ? ' class="selected"' : '') + '><td>' + icon('ok') + '</td><td>网络层</td><td>' +
        en('IP包生存周期太短(请看数据包  ' + e[0] + ')') + '</td><td>' + en('192.168.0.2') +
        '</td><td class="r">' + en(e[1]) + '</td><td>' + en('239.255.255.250') +
        '</td><td class="r">' + en('ssdp') + '</td><td>' + en('100') + '</td></tr>';
}).join('');
```
